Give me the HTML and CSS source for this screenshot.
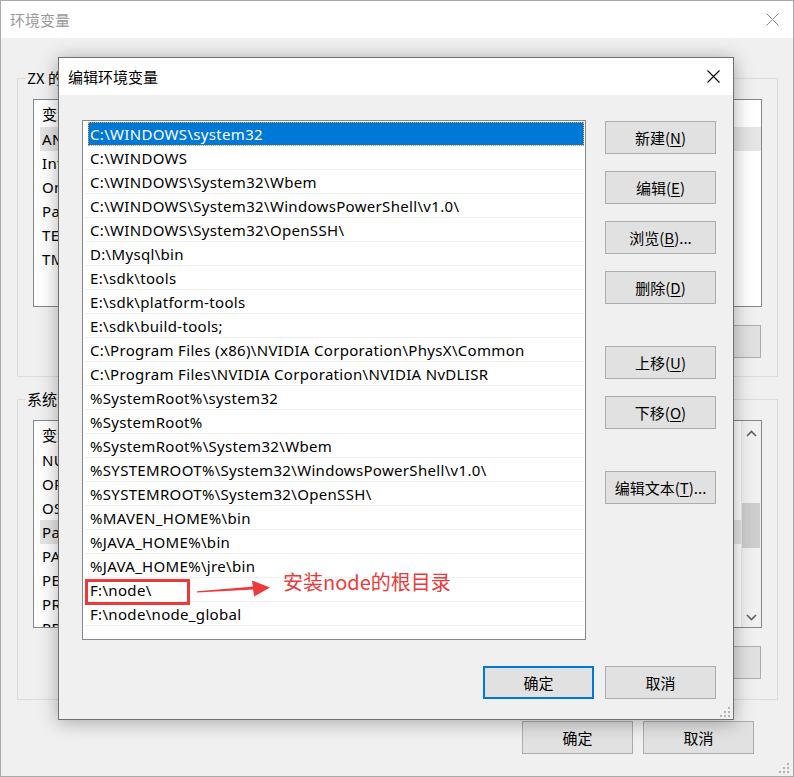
FILE: index.html
```html
<!DOCTYPE html>
<html lang="zh-CN">
<head>
<meta charset="utf-8">
<title>环境变量</title>
<link rel="stylesheet" href="styles.css">
</head>
<body>
<div class="page">
  <div class="win">
    <div class="titlebar">
      <span class="title">环境变量</span>
      <svg class="xicon bgx" width="13" height="13" viewBox="0 0 13 13"><path d="M0.5 0.5L12.5 12.5M12.5 0.5L0.5 12.5" stroke="#8c8c8c" stroke-width="1"/></svg>
    </div>
    <div class="winbody">
      <div class="group g1">
        <div class="legend">ZX 的用户变量(<u>U</u>)</div>
        <div class="vlist">
          <div class="vhead"><span class="c1">变量</span></div>
          <div class="vrow sel"><span class="c1">ANDROID_HOME</span></div>
          <div class="vrow"><span class="c1">IntelliJ IDEA</span></div>
          <div class="vrow"><span class="c1">OneDrive</span></div>
          <div class="vrow"><span class="c1">Path</span></div>
          <div class="vrow"><span class="c1">TEMP</span></div>
          <div class="vrow"><span class="c1">TMP</span></div>
        </div>
        <div class="btnrow">
          <div class="btn">新建(<u>N</u>)...</div>
          <div class="btn">编辑(<u>E</u>)...</div>
          <div class="btn">删除(<u>D</u>)</div>
        </div>
      </div>
      <div class="group g2">
        <div class="legend">系统变量(<u>S</u>)</div>
        <div class="vlist scroll">
          <div class="vcols">
            <div class="vhead"><span class="c1">变量</span></div>
            <div class="vrow"><span class="c1">NUMBER_OF_PROCESSORS</span></div>
            <div class="vrow"><span class="c1">ORACLE_HOME</span></div>
            <div class="vrow"><span class="c1">OS</span></div>
            <div class="vrow sel"><span class="c1">Path</span></div>
            <div class="vrow"><span class="c1">PATHEXT</span></div>
            <div class="vrow"><span class="c1">PERL5LIB</span></div>
            <div class="vrow"><span class="c1">PROCESSOR_ARCHITECTURE</span></div>
            <div class="vrow"><span class="c1">PROCESSOR_LEVEL</span></div>
          </div>
          <div class="sbar">
            <svg class="sarrow" width="11" height="7" viewBox="0 0 11 7"><path d="M1 6L5.5 1.5L10 6" fill="none" stroke="#606060" stroke-width="1.6"/></svg>
            <div class="strack"><div class="sthumb"></div></div>
            <svg class="sarrow" width="11" height="7" viewBox="0 0 11 7"><path d="M1 1L5.5 5.5L10 1" fill="none" stroke="#606060" stroke-width="1.6"/></svg>
          </div>
        </div>
        <div class="btnrow">
          <div class="btn">新建(<u>W</u>)...</div>
          <div class="btn">编辑(<u>I</u>)...</div>
          <div class="btn">删除(<u>L</u>)</div>
        </div>
      </div>
      <div class="btnrow foot">
        <div class="btn">确定</div>
        <div class="btn">取消</div>
      </div>
    </div>
    <svg class="grip wingrip" width="12" height="12" viewBox="0 0 12 12"><g fill="#b4b4b4"><rect x="8" y="0" width="2" height="2"/><rect x="4" y="4" width="2" height="2"/><rect x="8" y="4" width="2" height="2"/><rect x="0" y="8" width="2" height="2"/><rect x="4" y="8" width="2" height="2"/><rect x="8" y="8" width="2" height="2"/></g></svg>
  </div>

  <div class="dialog">
    <div class="dtitle">
      <span class="dname">编辑环境变量</span>
      <svg class="xicon" width="13" height="13" viewBox="0 0 13 13"><path d="M0.5 0.5L12.5 12.5M12.5 0.5L0.5 12.5" stroke="#000" stroke-width="1.1"/></svg>
    </div>
    <div class="dbody">
      <div class="dmain">
        <div class="plist">
          <div class="prow sel">C:\WINDOWS\system32</div>
          <div class="prow">C:\WINDOWS</div>
          <div class="prow">C:\WINDOWS\System32\Wbem</div>
          <div class="prow">C:\WINDOWS\System32\WindowsPowerShell\v1.0\</div>
          <div class="prow">C:\WINDOWS\System32\OpenSSH\</div>
          <div class="prow">D:\Mysql\bin</div>
          <div class="prow">E:\sdk\tools</div>
          <div class="prow">E:\sdk\platform-tools</div>
          <div class="prow">E:\sdk\build-tools;</div>
          <div class="prow">C:\Program Files (x86)\NVIDIA Corporation\PhysX\Common</div>
          <div class="prow">C:\Program Files\NVIDIA Corporation\NVIDIA NvDLISR</div>
          <div class="prow">%SystemRoot%\system32</div>
          <div class="prow">%SystemRoot%</div>
          <div class="prow">%SystemRoot%\System32\Wbem</div>
          <div class="prow">%SYSTEMROOT%\System32\WindowsPowerShell\v1.0\</div>
          <div class="prow">%SYSTEMROOT%\System32\OpenSSH\</div>
          <div class="prow">%MAVEN_HOME%\bin</div>
          <div class="prow">%JAVA_HOME%\bin</div>
          <div class="prow">%JAVA_HOME%\jre\bin</div>
          <div class="prow">F:\node\</div>
          <div class="prow">F:\node\node_global</div>
        </div>
        <div class="pbtns">
          <div class="btn">新建(<u>N</u>)</div>
          <div class="btn">编辑(<u>E</u>)</div>
          <div class="btn">浏览(<u>B</u>)...</div>
          <div class="btn">删除(<u>D</u>)</div>
          <div class="btn sp">上移(<u>U</u>)</div>
          <div class="btn">下移(<u>O</u>)</div>
          <div class="btn sp">编辑文本(<u>T</u>)...</div>
        </div>
      </div>
      <div class="dfoot">
        <div class="btn def">确定</div>
        <div class="btn">取消</div>
      </div>
    </div>
    <svg class="grip dgrip" width="12" height="12" viewBox="0 0 12 12"><g fill="#b4b4b4"><rect x="8" y="0" width="2" height="2"/><rect x="4" y="4" width="2" height="2"/><rect x="8" y="4" width="2" height="2"/><rect x="0" y="8" width="2" height="2"/><rect x="4" y="8" width="2" height="2"/><rect x="8" y="8" width="2" height="2"/></g></svg>
  </div>

  <div class="annot-box"></div>
  <svg class="annot-arrow" width="80" height="20" viewBox="0 0 80 20"><path d="M0 11.2L57 6.4L57 9.6L0 12.4Z" fill="#ec3a3a"/><path d="M55 0.5L73 7.5L57 16.5Z" fill="#ec3a3a"/></svg>
  <div class="annot-text">安装node的根目录</div>
</div>
</body>
</html>
```

FILE: styles.css
```css
html, body {
  margin: 0;
  padding: 0;
  background: #f0f0f0;
}
body {
  font-family: "Noto Sans", "Noto Sans CJK SC", sans-serif;
  font-size: 15px;
  color: #000;
}
u { text-decoration: underline; text-underline-offset: 2px; }

.page {
  position: relative;
  width: 794px;
  height: 777px;
  overflow: hidden;
}

/* ---------- background window ---------- */
.win {
  box-sizing: border-box;
  width: 794px;
  height: 777px;
  border: 1px solid #aaaaaa;
  background: #f0f0f0;
  display: flex;
  flex-direction: column;
  position: relative;
}
.titlebar {
  height: 37px;
  background: #fff;
  display: flex;
  align-items: center;
  justify-content: space-between;
  padding: 0 14px 0 9px;
  flex: none;
}
.title {
  color: #9a9a9a;
  font-family: "Noto Sans CJK SC", sans-serif;
}
.xicon { display: block; }

.winbody {
  display: flex;
  flex-direction: column;
}
.group {
  border: 1px solid #dcdcdc;
  margin: 0 15px 0 16px;
  padding: 0 15px 18px;
}
.g1 { margin-top: 40px; }
.g2 { margin-top: 22px; padding-bottom: 20px; }
.legend {
  width: fit-content;
  height: 20px;
  line-height: 20px;
  margin: -11px 0 0 -7px;
  padding: 0 1px;
  background: #f0f0f0;
  font-family: "Noto Sans CJK SC", sans-serif;
}
.vlist {
  box-sizing: border-box;
  height: 208px;
  margin-top: 11px;
  border: 1px solid #828790;
  background: #fff;
  overflow: hidden;
  padding: 0 0 0 1px;
}
.vlist.scroll {
  display: flex;
}
.vcols { flex: 1; min-width: 0; }
.vhead {
  height: 27px;
  line-height: 28px;
  display: flex;
  white-space: nowrap;
  font-family: "Noto Sans CJK SC", sans-serif;
}
.vrow {
  height: 24px;
  line-height: 24px;
  display: flex;
  white-space: nowrap;
  margin-left: 5px;
  letter-spacing: 0.3px;
}
.vhead .c1 { padding-left: 7px; }
.vrow .c1 { padding-left: 2px; }
.c1 { width: 200px; flex: none; overflow: hidden; }
.vrow.sel { background: #e5e5e5; }

.sbar {
  width: 20px;
  flex: none;
  background: #f0f0f0;
  display: flex;
  flex-direction: column;
  align-items: center;
  padding: 9px 0 6px;
  box-sizing: border-box;
  border-left: 1px solid #e8e8e8;
}
.sarrow { display: block; flex: none; }
.strack { flex: 1; width: 100%; padding-top: 66px; box-sizing: border-box; }
.sthumb { height: 45px; background: #cdcdcd; margin: 0 1px 0 0; }

.btnrow {
  display: flex;
  justify-content: flex-end;
  gap: 11px;
  margin-top: 18px;
  padding-right: 1px;
}
.btnrow.foot {
  margin-top: 21px;
  padding-right: 39px;
  gap: 10px;
}
.btn {
  box-sizing: border-box;
  width: 111px;
  height: 33px;
  border: 1px solid #adadad;
  background: #e1e1e1;
  display: flex;
  align-items: center;
  justify-content: center;
  white-space: nowrap;
  font-family: "Noto Sans CJK SC", sans-serif;
  font-size: 15px;
}

.grip { position: absolute; display: block; }
.wingrip { right: 2px; bottom: 1px; }

/* ---------- edit dialog ---------- */
.dialog {
  position: absolute;
  left: 58px;
  top: 57px;
  width: 676px;
  height: 663px;
  box-sizing: border-box;
  border: 1px solid #707070;
  background: #f0f0f0;
  box-shadow: 0 2px 18px rgba(0, 0, 0, 0.32);
  display: flex;
  flex-direction: column;
}
.dtitle {
  height: 37px;
  flex: none;
  background: #fff;
  display: flex;
  align-items: center;
  justify-content: space-between;
  padding: 0 13px 0 9px;
}
.dname { font-family: "Noto Sans CJK SC", sans-serif; }
.dbody {
  flex: 1;
  display: flex;
  flex-direction: column;
  padding: 25px 17px 20px 23px;
}
.dmain {
  display: flex;
  gap: 19px;
}
.plist {
  box-sizing: border-box;
  width: 504px;
  height: 520px;
  border: 1px solid #828790;
  background: #fff;
  padding: 1px 1px 0;
  overflow: hidden;
}
.prow {
  height: 23px;
  line-height: 24px;
  border-bottom: 1px solid #f0f0f0;
  padding-left: 6px;
  white-space: nowrap;
  letter-spacing: 0.32px;
}
.prow.sel {
  background: #0078d7;
  color: #fff;
  margin-left: 4px;
  padding-left: 2px;
  outline: 1px dotted #f0a040;
  outline-offset: -1px;
}
.pbtns {
  display: flex;
  flex-direction: column;
  gap: 17px;
  padding-top: 1px;
}
.pbtns .sp { margin-top: 25px; }
.dfoot {
  display: flex;
  justify-content: flex-end;
  gap: 11px;
  margin-top: 26px;
}
.btn.def { border: 2px solid #0078d7; }
.dgrip { right: 1px; bottom: 0px; }

/* ---------- annotation ---------- */
.annot-box {
  position: absolute;
  left: 85px;
  top: 579px;
  width: 105px;
  height: 26px;
  box-sizing: border-box;
  border: 3px solid #ec3a3a;
}
.annot-arrow {
  position: absolute;
  left: 197px;
  top: 580px;
  display: block;
}
.annot-text {
  position: absolute;
  left: 283px;
  top: 568px;
  height: 28px;
  line-height: 28px;
  font-family: "Noto Sans CJK SC", sans-serif;
  font-size: 20px;
  color: #ec3a3a;
  white-space: nowrap;
}
```
